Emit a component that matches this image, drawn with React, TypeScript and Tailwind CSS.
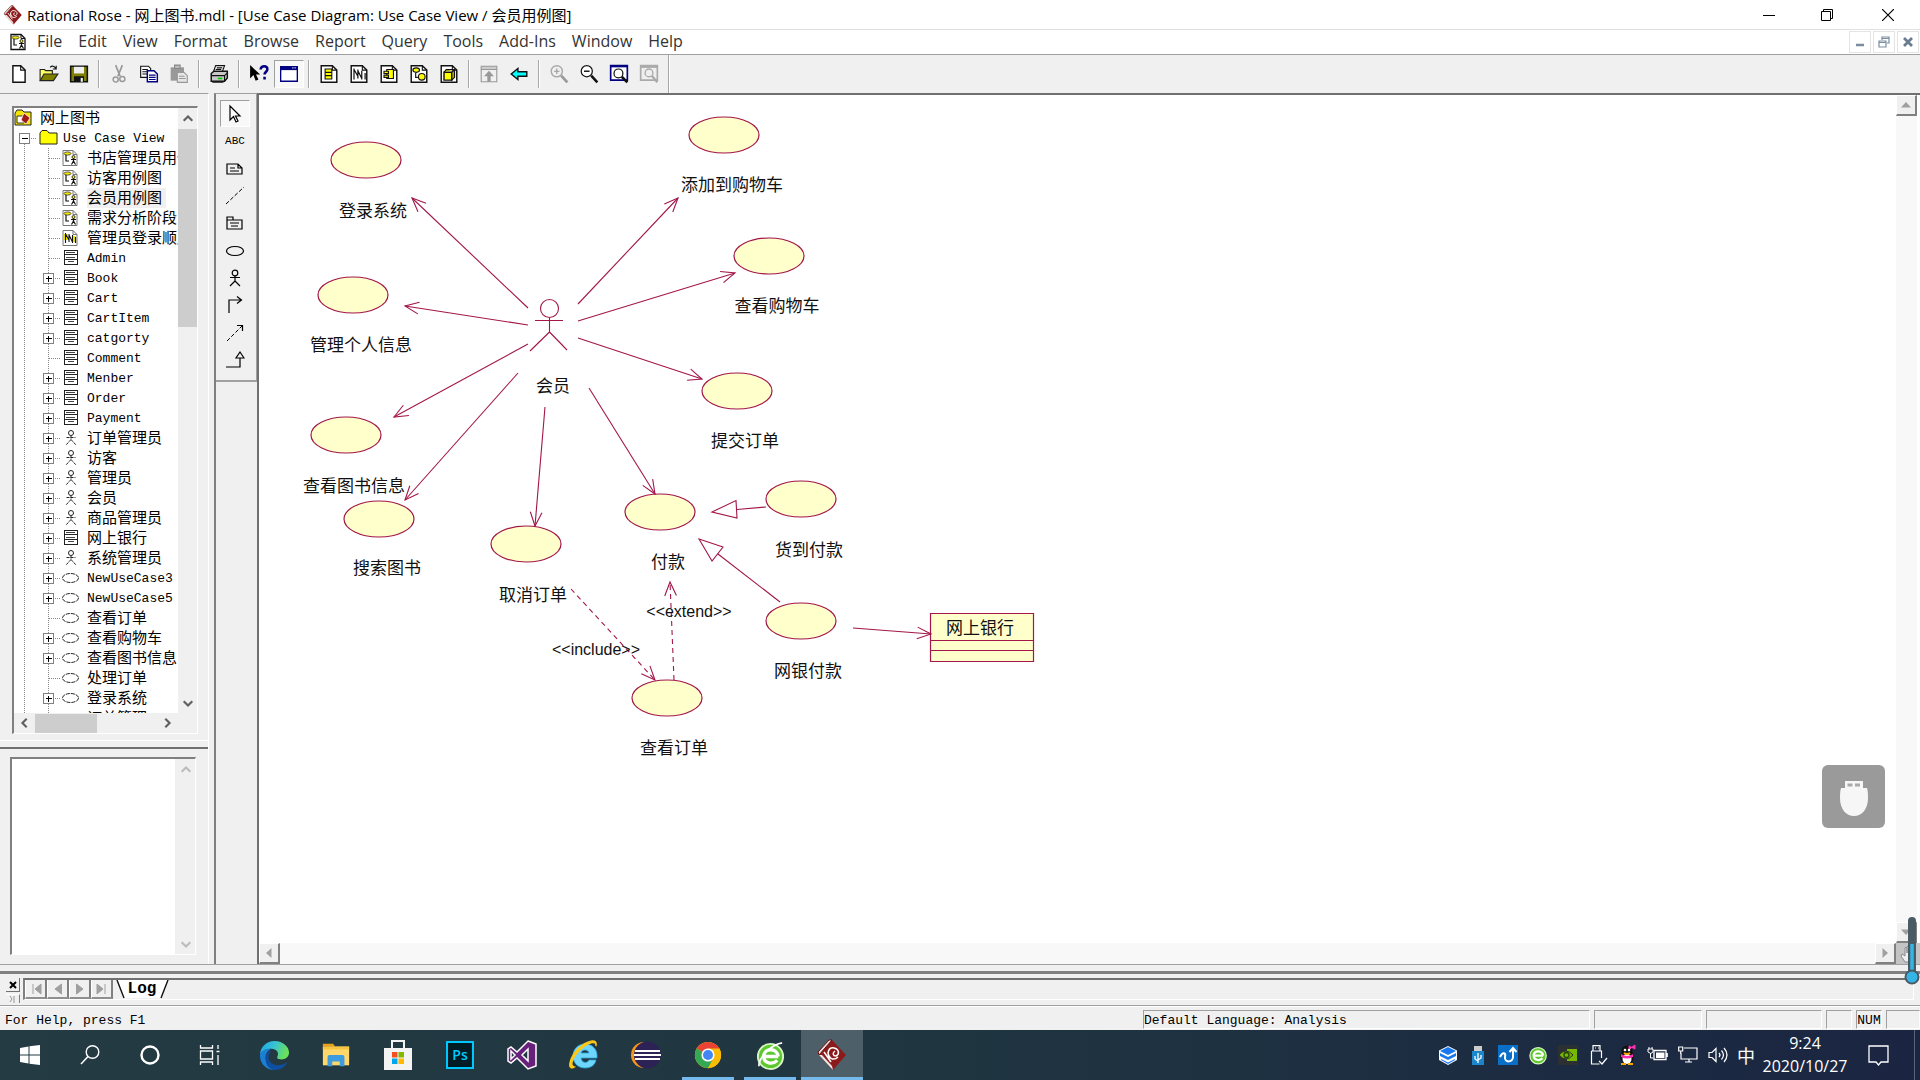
import React from "react";

const UI = 'font-["Open_Sans","Noto_Sans_CJK_SC",sans-serif]';

/* ---------- shared icons ---------- */

function RoseIcon({ size }: { size: number }) {
  return (
    <svg width={size} height={size} viewBox="0 0 32 32">
      <path d="M16 1 30 16 17 31 3 16Z" fill="#8c1a1a" />
      <path d="M16 1 3 16 2 13 13 1Z" fill="#e8dcdc" stroke="#6b1010" strokeWidth="1" />
      <path d="M3 16 17 31 16 27 6 16Z" fill="#f1e6e6" />
      <path d="M14 18c-4-4-1-10 4-9 5 1 6 6 2 8-3 0-4-3-1-5M12 13c0 7 6 9 10 5M8 13l7 10" fill="none" stroke="#fff" strokeWidth="1.500" />
    </svg>
  );
}

function Page({ children, size = 18, soft = false }: { children?: React.ReactNode; size?: number; soft?: boolean }) {
  const line = soft ? "#777" : "#111";
  return (
    <svg width={size} height={size} viewBox="0 0 18 18">
      <path d="M2 1.500h10l4 4v11H2z" fill="#fff" stroke={line} strokeWidth={soft ? 1 : 1.3} />
      <path d="M12 1.500v4h4" fill="none" stroke={line} />
      {children}
    </svg>
  );
}

const UseCaseGlyph = () => (
  <>
    <ellipse cx="6.500" cy="4.500" rx="3.500" ry="1.600" fill="#f2e600" stroke="#333" strokeWidth=".8" />
    <path d="M5 6v6h3M12.500 9v3.500M10 10.500h5M12.500 12l-2 3.500M12.500 12l2 3.500" fill="none" stroke="#111" strokeWidth="1.200" />
    <circle cx="12.500" cy="8" r="1.500" fill="#f2e600" stroke="#111" strokeWidth=".8" />
  </>
);
const SequenceGlyph = () => (
  <path d="M4.500 4v10M8 5v8M11.500 6v8M14.500 8v6M4.500 5 8 11M8 6l3.500 7" stroke="#111" strokeWidth="1.100" fill="none" />
);

/* ---------- tree ---------- */

type Kind = "usecaseDiagram" | "sequence" | "class" | "actor" | "usecase";
type Item = { label: string; kind: Kind; open?: boolean; latin?: boolean; selected?: boolean };

const items: Item[] = [
  { label: "书店管理员用例图", kind: "usecaseDiagram" },
  { label: "访客用例图", kind: "usecaseDiagram" },
  { label: "会员用例图", kind: "usecaseDiagram", selected: true },
  { label: "需求分析阶段", kind: "usecaseDiagram" },
  { label: "管理员登录顺序图", kind: "sequence" },
  { label: "Admin", kind: "class", latin: true },
  { label: "Book", kind: "class", open: true, latin: true },
  { label: "Cart", kind: "class", open: true, latin: true },
  { label: "CartItem", kind: "class", open: true, latin: true },
  { label: "catgorty", kind: "class", open: true, latin: true },
  { label: "Comment", kind: "class", latin: true },
  { label: "Menber", kind: "class", open: true, latin: true },
  { label: "Order", kind: "class", open: true, latin: true },
  { label: "Payment", kind: "class", open: true, latin: true },
  { label: "订单管理员", kind: "actor", open: true },
  { label: "访客", kind: "actor", open: true },
  { label: "管理员", kind: "actor", open: true },
  { label: "会员", kind: "actor", open: true },
  { label: "商品管理员", kind: "actor", open: true },
  { label: "网上银行", kind: "class", open: true },
  { label: "系统管理员", kind: "actor", open: true },
  { label: "NewUseCase3", kind: "usecase", open: true, latin: true },
  { label: "NewUseCase5", kind: "usecase", open: true, latin: true },
  { label: "查看订单", kind: "usecase" },
  { label: "查看购物车", kind: "usecase", open: true },
  { label: "查看图书信息", kind: "usecase", open: true },
  { label: "处理订单", kind: "usecase" },
  { label: "登录系统", kind: "usecase", open: true },
  { label: "订单管理", kind: "usecase", open: true },
];

function KindIcon({ kind }: { kind: Kind }) {
  switch (kind) {
    case "usecaseDiagram":
      return <Page soft><UseCaseGlyph /></Page>;
    case "sequence":
      return (
        <Page soft>
          <rect x="3" y="5" width="4" height="6" fill="#f2e600" />
          <rect x="11" y="7" width="3" height="6" fill="#f2e600" />
          <SequenceGlyph />
        </Page>
      );
    case "class":
      return (
        <svg width="18" height="18" viewBox="0 0 18 18" shapeRendering="crispEdges">
          <path d="M3 1.500h13v14H3zM3 5.500h13M3 10.500h13" fill="none" stroke="#222" strokeWidth="1" />
          <path d="M5 3.500h9M5 8.500h9M7 12.500h6" stroke="#444" strokeWidth="1" />
        </svg>
      );
    case "actor":
      return (
        <svg width="18" height="18" viewBox="0 0 18 18">
          <circle cx="10" cy="4" r="2.500" fill="none" stroke="#222" />
          <path d="M10 6.500v4M5.500 8.500h9M10 10.500l-5 5.500M10 10.500l5 5.500" fill="none" stroke="#222" strokeDasharray="3 1" />
        </svg>
      );
    default:
      return (
        <svg width="18" height="18" viewBox="0 0 18 18">
          <ellipse cx="9.500" cy="9" rx="8" ry="4.500" fill="none" stroke="#222" strokeDasharray="4 1" />
        </svg>
      );
  }
}

function Expander({ sign }: { sign: "+" | "-" }) {
  return (
    <svg width="24" height="20" viewBox="0 0 24 20" shapeRendering="crispEdges">
      <path d={sign === "+" ? "M12.500 0v20" : "M12.500 10v10"} stroke="#888" strokeDasharray="1 1" />
      <path d="M13 10.500h11" stroke="#888" strokeDasharray="1 1" />
      <rect x="7.500" y="5.500" width="10" height="10" fill="#fff" stroke="#808080" />
      <path d={sign === "+" ? "M10 10.500h6M12.500 8v6" : "M10 10.500h6"} stroke="#000" />
    </svg>
  );
}

const Branch = () => (
  <svg width="24" height="20" viewBox="0 0 24 20" shapeRendering="crispEdges">
    <path d="M12.500 0v20M13 10.500h11" stroke="#888" strokeDasharray="1 1" />
  </svg>
);

const Stem = () => (
  <svg width="22" height="20" viewBox="0 0 22 20" shapeRendering="crispEdges" className="shrink-0">
    <path d="M10.500 0v20" stroke="#888" strokeDasharray="1 1" />
  </svg>
);

const CJK15 = 'leading-[18px] pb-0.5 text-[15px] font-["Noto_Sans_CJK_SC",sans-serif]';
const MONO13 = 'leading-[18px] pt-0.5 text-[13px] font-["Liberation_Mono",monospace]';

function Tree() {
  return (
    <div className="h-full overflow-hidden bg-white text-black">
      <div className="flex h-5 items-center">
        <svg width="19" height="18" viewBox="0 0 19 18">
          <path d="M1 4 3 1h5l2 2h7v13H1z" fill="#f2e600" stroke="#222" />
          <path d="M3 7h7v7H3z" fill="#fff" stroke="#333" />
          <path d="m10 4 6 5-4 6-5-4z" fill="#a01818" stroke="#fff" strokeWidth=".7" />
        </svg>
        <span className={`ml-[7px] ${CJK15}`}>网上图书</span>
      </div>
      <div className="flex h-5 items-center">
        <button aria-label="Collapse Use Case View" className="-ml-0.5 shrink-0"><Expander sign="-" /></button>
        <svg width="20" height="18" viewBox="0 0 20 18" className="ml-[3px]">
          <path d="M1 4 3 1.500h5L10 4h8v11H1z" fill="#ff0" stroke="#222" />
        </svg>
        <span className={`ml-1 whitespace-nowrap ${MONO13}`}>Use Case View</span>
      </div>
      {items.map((it, i) => (
        <div key={i} className="flex h-5 items-center">
          <Stem />
          {it.open ? (
            <button aria-label={`Expand ${it.label}`} className="shrink-0"><Expander sign="+" /></button>
          ) : (
            <span className="shrink-0"><Branch /></span>
          )}
          <span className="ml-px shrink-0"><KindIcon kind={it.kind} /></span>
          <span className={`ml-2 whitespace-nowrap pr-1 ${it.latin ? MONO13 : CJK15} ${it.selected ? "bg-[#f0f0f0]" : ""}`}>
            {it.label}
          </span>
        </div>
      ))}
    </div>
  );
}

/* ---------- toolbar ---------- */

function ToolIcon({ name }: { name: string }) {
  const s = { width: 20, height: 20, viewBox: "0 0 18 18" };
  switch (name) {
    case "New":
      return <svg {...s}><path d="M3.500 1.500h7l4 4v11h-11z" fill="#fff" stroke="#111" strokeWidth="1.300" /><path d="M10.500 1.500v4h4" fill="none" stroke="#111" /></svg>;
    case "Open":
      return <svg {...s}><path d="M1 15V5h4l1 1h6v3" fill="#ffff66" stroke="#222" /><path d="M1 15 4.500 9H17l-4 6z" fill="#808000" stroke="#222" /><path d="M10 3c2-2 4-1 5 1m.500-2.500V4.500H12.500" fill="none" stroke="#111" /></svg>;
    case "Save":
      return <svg {...s}><path d="M1.500 2h15v14h-15z" fill="#808000" stroke="#111" strokeWidth="1.400" /><path d="M4.500 2.500h9v6h-9z" fill="#eee" /><path d="M4.500 11h9v5h-9z" fill="#111" /><path d="M10.500 12.500h2V16h-2z" fill="#eee" /></svg>;
    case "Cut":
      return <svg {...s}><path d="M6 1l4 10M12 1 8 11" stroke="#999" strokeWidth="1.500" fill="none" /><circle cx="6" cy="14" r="2.300" fill="none" stroke="#999" strokeWidth="1.300" /><circle cx="12" cy="13.500" r="2.300" fill="none" stroke="#999" strokeWidth="1.300" /></svg>;
    case "Copy":
      return <svg {...s}><path d="M1.500 2h7l2 2v8h-9z" fill="#fff" stroke="#111" /><path d="M3 5h5M3 7h5M3 9h5" stroke="#111" /><path d="M7.500 6h6l3 3v7h-9z" fill="#fff" stroke="#000080" strokeWidth="1.300" /><path d="M9 10h6M9 12h6M9 14h6" stroke="#000080" /></svg>;
    case "Paste":
      return <svg {...s}><path d="M1.500 3h12v12h-12z" fill="#999" /><path d="M5 1h5v3H5z" fill="#bbb" stroke="#888" /><path d="M7.500 7.500h6l3 3v6h-9z" fill="#e6e6e6" stroke="#999" /><path d="M9 11h5M9 13h6" stroke="#999" /></svg>;
    case "Print":
      return <svg {...s}><path d="M6 1.500h8L12 7H4z" fill="#fff" stroke="#111" /><path d="M2 8.500 4.500 6.500h12v6L14 15.500H2z" fill="#c8c8c8" stroke="#111" strokeWidth="1.300" /><path d="M2 10.500h12v5M14 10.500l2.500-2.500M7 3.500h5M6 5h5" stroke="#111" fill="none" /><path d="M8 13h4" stroke="#0c0" strokeWidth="1.500" /><path d="M3 16.500h10" stroke="#333" /></svg>;
    case "Context help":
      return <svg {...s}><path d="M1 1v12l3-3 2 5 2.500-1-2.200-4.500H10z" fill="#000" /><path d="M10.500 5c0-4 6.500-4 6 0 0 2-2.500 2-2.500 4.500M14 11.500V14" fill="none" stroke="#000080" strokeWidth="2.300" /></svg>;
    case "View documentation":
      return <svg {...s}><path d="M1.500 2.500h15v13h-15z" fill="#fff" stroke="#000080" strokeWidth="1.200" /><path d="M1 2h16v3.500H1z" fill="#000080" /><path d="M12 3.500h1M14 3.500h1" stroke="#fff" /></svg>;
    case "Browse class diagram":
      return <Page size={20}><path d="M5.500 4.500h6v9h-6z" fill="#ff0" stroke="#111" /><path d="M5.500 7.500h6M5.500 10.500h6" stroke="#111" /></Page>;
    case "Browse interaction diagram":
      return <Page size={20}><SequenceGlyph /></Page>;
    case "Browse component diagram":
      return <Page size={20}><path d="M7 5h6v8H7z" fill="#ff0" stroke="#111" /><path d="M4.500 6.500h4v2h-4zM4.500 10h4v2h-4z" fill="#ff0" stroke="#111" /></Page>;
    case "Browse state machine diagram":
      return <Page size={20}><ellipse cx="6.500" cy="5.500" rx="3" ry="2" fill="#ff0" stroke="#111" /><path d="M6 8v4h2" stroke="#111" fill="none" /><circle cx="11.500" cy="11.500" r="3" fill="#ff0" stroke="#111" /></Page>;
    case "Browse deployment diagram":
      return <Page size={20}><path d="M4.500 7.500h7v7h-7z" fill="#ff0" stroke="#111" strokeWidth="1.300" /><path d="m4.500 7.500 2-2.500h7.500v7l-2.500 2.500v-7L14 5" fill="#aaaa00" stroke="#111" /></Page>;
    case "Browse parent":
      return <svg {...s}><path d="M2 2h14v3H2z" fill="#ccc" stroke="#999" /><path d="M2 5v11h14V5" fill="none" stroke="#999" /><path d="M9 6 4.500 11H7.500v5h3v-5h3z" fill="#999" /></svg>;
    case "Browse previous":
      return <svg {...s}><path d="M2 9 8 4v3h8v4H8v3z" fill="#0ff" stroke="#111" strokeWidth="1.300" /></svg>;
    case "Zoom in":
      return <svg {...s}><circle cx="7" cy="6.500" r="5" fill="none" stroke="#aaa" strokeWidth="1.300" /><path d="M4.500 6.500h5M7 4v5" stroke="#999" /><path d="m11 10.500 5.500 6" stroke="#999" strokeWidth="2.500" /></svg>;
    case "Zoom out":
      return <svg {...s}><circle cx="7" cy="6.500" r="5" fill="#fff" stroke="#111" strokeWidth="1.100" /><path d="M4.500 6.500h5" stroke="#111" strokeWidth="1.300" /><path d="m11 10.500 5.500 6" stroke="#111" strokeWidth="2.300" /></svg>;
    case "Fit in window":
      return <svg {...s}><path d="M1.500 1.500h15v13h-15z" fill="#fff" stroke="#000080" strokeWidth="1.500" /><path d="M1 2h16" stroke="#000080" strokeWidth="2" /><circle cx="8.500" cy="8.500" r="4" fill="#fff" stroke="#111" strokeWidth="1.100" /><path d="m11.500 11.500 5 5" stroke="#111" strokeWidth="2.300" /></svg>;
    default:
      return <svg {...s}><path d="M1.500 1.500h15v13h-15z" fill="#eee" stroke="#aaa" strokeWidth="1.500" /><path d="M1 2.500h16" stroke="#aaa" strokeWidth="2" /><circle cx="9" cy="8" r="3.500" fill="none" stroke="#aaa" strokeWidth="1.200" /><path d="m11.500 10.500 5 6" stroke="#aaa" strokeWidth="2" /></svg>;
  }
}

const toolGroups = [
  ["New", "Open", "Save"],
  ["Cut", "Copy", "Paste"],
  ["Print"],
  ["Context help", "View documentation"],
  ["Browse class diagram", "Browse interaction diagram", "Browse component diagram", "Browse state machine diagram", "Browse deployment diagram"],
  ["Browse parent", "Browse previous"],
  ["Zoom in", "Zoom out", "Fit in window", "Undo fit in window"],
];

function Toolbar() {
  return (
    <div className="flex h-[39px] shrink-0 items-center border-t border-[#a0a0a0] bg-[#f0f0f0] pl-1">
      {toolGroups.map((g, i) => (
        <React.Fragment key={i}>
          {i > 0 && <div className="mx-1 h-7 w-0.5 border-l border-[#a8a8a8] bg-white" />}
          {g.map((n) => (
            <button
              key={n}
              aria-label={n}
              className={`grid h-7 w-[30px] place-items-center ${n === "View documentation" ? "border border-b-white border-l-[#a0a0a0] border-r-white border-t-[#a0a0a0] bg-[#f8f8f8]" : ""}`}
            >
              <ToolIcon name={n} />
            </button>
          ))}
        </React.Fragment>
      ))}
      <div className="ml-1 h-full w-0.5 border-l border-[#a8a8a8] bg-white" />
    </div>
  );
}

/* ---------- palette ---------- */

const palette: { name: string; art: React.ReactNode }[] = [
  { name: "Selection tool", art: <path d="M5 2v14l3.500-3.500L11 18l2-1-2.500-5H15z" fill="#fff" stroke="#000" strokeWidth="1.200" /> },
  { name: "Text box", art: null },
  { name: "Note", art: <path d="M2 5h11l4 4v6H2zM13 5v4h4M5 9h5M5 12h9" fill="none" stroke="#000" strokeWidth="1.200" /> },
  { name: "Anchor note to item", art: <path d="M1 18 19 1" fill="none" stroke="#000" strokeDasharray="4 2" /> },
  { name: "Package", art: <path d="M2 7h15v9H2zM2 7V4h6v3M5 10h9M6 13h7" fill="none" stroke="#000" strokeWidth="1.200" /> },
  { name: "Use case", art: <ellipse cx="10" cy="10" rx="8.500" ry="4.500" fill="none" stroke="#000" strokeWidth="1.200" /> },
  { name: "Actor", art: <><circle cx="10" cy="5" r="2.800" fill="none" stroke="#000" strokeWidth="1.200" /><path d="M10 8v5M5 9.500h10M10 13l-5 5M10 13l5 5" stroke="#000" fill="none" strokeWidth="1.200" /></> },
  { name: "Unidirectional association", art: <path d="M4 18V5h12M12 1.500 16.500 5 12 8.500" fill="none" stroke="#000" strokeWidth="1.200" /> },
  { name: "Dependency", art: <><path d="M2 18 17 3" fill="none" stroke="#000" strokeDasharray="4 2" /><path d="M12 2.500h5.500V8" fill="none" stroke="#000" strokeWidth="1.200" /></> },
  { name: "Generalization", art: <path d="M1 17h14V8M11 8h8L15 2z" fill="none" stroke="#000" strokeWidth="1.200" /> },
];

/* ---------- diagram ---------- */

const ellipses = [
  [366, 160], [724, 135], [769, 256], [353, 295], [737, 391], [346, 435], [379, 519],
  [526, 544], [660, 512], [801, 499], [801, 621], [667, 698],
];

const captions: [string, number, number][] = [
  ["登录系统", 373, 210], ["添加到购物车", 732, 184], ["查看购物车", 777, 305], ["管理个人信息", 361, 344],
  ["会员", 553, 385], ["提交订单", 745, 440], ["查看图书信息", 354, 485], ["搜索图书", 387, 567],
  ["取消订单", 533, 594], ["付款", 668, 561], ["货到付款", 809, 549], ["网银付款", 808, 670],
  ["查看订单", 674, 747], ["网上银行", 980, 627],
];

type Link = { from: [number, number]; to: [number, number]; dashed?: boolean };
const links: Link[] = [
  { from: [528, 308], to: [412, 198] },
  { from: [528, 325], to: [405, 306] },
  { from: [528, 344], to: [394, 417] },
  { from: [518, 373], to: [405, 500] },
  { from: [545, 407], to: [535, 526] },
  { from: [589, 388], to: [655, 494] },
  { from: [578, 338], to: [702, 379] },
  { from: [578, 321], to: [735, 273] },
  { from: [578, 304], to: [678, 198] },
  { from: [853, 628], to: [931, 634] },
  { from: [674, 680], to: [670, 582], dashed: true },
  { from: [571, 589], to: [655, 680], dashed: true },
];

function headPath({ from, to }: Link) {
  const a = Math.atan2(to[1] - from[1], to[0] - from[0]);
  const p = (d: number) => `${to[0] - 15 * Math.cos(a + d)} ${to[1] - 15 * Math.sin(a + d)}`;
  return `M${p(0.4)}L${to[0]} ${to[1]}L${p(-0.4)}`;
}

function Diagram() {
  return (
    <svg width="800" height="700" viewBox="260 95 800 700" className="ml-px block" role="img" aria-label="会员用例图">
      <g fill="#ffffcc" stroke="#a3164a" strokeWidth="1.200">
        {ellipses.map(([x, y]) => <ellipse key={`${x}-${y}`} cx={x} cy={y} rx="35" ry="18" />)}
        <path d="M930.500 613.500h103v48h-103zM930.500 640.500h103M930.500 650.500h103" />
      </g>
      <g fill="none" stroke="#a3164a" strokeWidth="1.100">
        {links.map((l, i) => (
          <React.Fragment key={i}>
            <path d={`M${l.from[0]} ${l.from[1]}L${l.to[0]} ${l.to[1]}`} strokeDasharray={l.dashed ? "5 4" : undefined} />
            <path d={headPath(l)} />
          </React.Fragment>
        ))}
        <path d="M712 512 736 500.500 737 518zM737 509.500 766 507" />
        <path d="M699 539 723 547 712 561zM718 554 780 602" />
        <circle cx="549.500" cy="308.500" r="9" />
        <path d="M549.500 318v14M535 320.500h28M549.500 332 530 351M549.500 332 567 350" />
      </g>
      <g fill="#111" textAnchor="middle" fontSize="17" fontFamily='"Noto Sans CJK SC", sans-serif'>
        {captions.map(([t, x, y]) => <text key={t} x={x} y={y + 7}>{t}</text>)}
      </g>
      <g fill="#111" textAnchor="middle" fontSize="16" fontFamily='"Liberation Sans", sans-serif'>
        <text x="689" y="617">&lt;&lt;extend&gt;&gt;</text>
        <text x="596" y="655">&lt;&lt;include&gt;&gt;</text>
      </g>
    </svg>
  );
}

/* ---------- scrollbars ---------- */

const chevrons = { up: "M2 9l5-5 5 5", down: "M2 5l5 5 5-5", left: "M9 2 4 7l5 5", right: "M5 2l5 5-5 5" };
const triangles = { up: "M2 9.500 7 4l5 5.500z", down: "M2 4.500h10L7 10z", left: "M9.500 2v10L4 7z", right: "M4.500 2v10L10 7z" };
type Dir = keyof typeof chevrons;

function Chevron({ dir, color = "#606060" }: { dir: Dir; color?: string }) {
  return (
    <button aria-label={`Scroll ${dir}`} className="grid size-[21px] shrink-0 place-items-center">
      <svg width="12" height="12" viewBox="0 0 14 14"><path d={chevrons[dir]} fill="none" stroke={color} strokeWidth="2.500" /></svg>
    </button>
  );
}

function Raised({ dir, label }: { dir: Dir; label: string }) {
  return (
    <button aria-label={label} className="grid size-[21px] shrink-0 place-items-center border-b-2 border-l border-r-2 border-t border-b-[#808080] border-l-white border-r-[#808080] border-t-white bg-[#f0f0f0]">
      <svg width="14" height="14" viewBox="0 0 14 14"><path d={triangles[dir]} fill="#a0a0a0" /></svg>
    </button>
  );
}

/* ---------- taskbar ---------- */

const apps: { name: string; art: React.ReactNode; running?: boolean; active?: boolean }[] = [
  {
    name: "Microsoft Edge",
    art: (
      <svg width="31" height="31" viewBox="0 0 32 32">
        <defs>
          <linearGradient id="edgeTop" x1="0" y1="0" x2="1" y2="0.300"><stop offset="0" stopColor="#1ea4e0" /><stop offset=".5" stopColor="#35c1d8" /><stop offset="1" stopColor="#6be05a" /></linearGradient>
        </defs>
        <path d="M1 16C1 7 8 1 16 1c9 0 15 6 15 12 0 5-4 7-8 7-3 0-5-1-4-3 2-4-1-8-6-8-6 0-12 4-12 7z" fill="url(#edgeTop)" />
        <path d="M1 16c0-4 6-8 12-7-5 2-7 7-6 12 1 6 6 10 12 10h-3C8 31 1 25 1 16z" fill="#1b7fd6" />
        <path d="M13 11c-4 3-4 9-1 12 4 4 11 4 17 0-2 5-7 8-12 8C11 31 7 26 7 20c0-5 2-8 6-9z" fill="#0f4f9f" />
      </svg>
    ),
  },
  {
    name: "File Explorer",
    art: (
      <svg width="30" height="30" viewBox="0 0 32 32">
        <path d="M2 4h11l2 3H2z" fill="#e8a317" />
        <path d="M2 7h28v20H2z" fill="#ffd76a" /><path d="M2 7h28v3H2z" fill="#f9c440" />
        <path d="M7 28V18q0-2 2-2h14q2 0 2 2v10h-5v-5h-8v5z" fill="#3d9be0" />
      </svg>
    ),
  },
  {
    name: "Microsoft Store",
    art: (
      <svg width="32" height="34" viewBox="0 0 32 34">
        <path d="M10 10V3h12v7" fill="none" stroke="#f3f3f3" strokeWidth="2" />
        <path d="M2 10h28v22H2z" fill="#f3f3f3" />
        <path d="M10 14h5.500v5.500H10z" fill="#f25022" /><path d="M16.500 14H22v5.500h-5.500z" fill="#7fba00" />
        <path d="M10 20.500h5.500V26H10z" fill="#00a4ef" /><path d="M16.500 20.500H22V26h-5.500z" fill="#ffb900" />
      </svg>
    ),
  },
  {
    name: "Photoshop",
    art: <span className={`grid h-7 w-7 place-items-center border-2 border-[#00c8ff] bg-[#001d26] text-sm font-semibold leading-4 text-[#00c8ff] ${UI}`}>Ps</span>,
  },
  {
    name: "Visual Studio",
    art: (
      <svg width="32" height="32" viewBox="0 0 32 32">
        <path d="M22 2 30 5v22l-8 3L11 19l-6 5-3-2V10l3-2 6 5zM22 10l-6 6 6 6zM5 12v8l4-4z" fill="#68217a" fillRule="evenodd" stroke="#fff" strokeWidth="1.500" />
      </svg>
    ),
  },
  {
    name: "Internet Explorer",
    art: (
      <svg width="32" height="32" viewBox="0 0 32 32">
        <path d="M17 5C10 5 5 10 5 17s5 12 12 12c6 0 10-3 11-8h-7c-1 3-7 4-8-2h16C30 10 24 5 17 5zm-4 9c1-4 7-4 8 0z" fill="#6fd6fb" fillRule="evenodd" stroke="#2ba6e0" strokeWidth=".8" />
        <path d="M6 28C-1 32 1 19 10 10 19 1 30-1 28 7c1-6-7-4-15 3S1 27 6 28z" fill="#fcc81a" stroke="#fcc81a" strokeWidth="1.500" />
      </svg>
    ),
  },
  {
    name: "Eclipse",
    art: (
      <svg width="32" height="32" viewBox="0 0 32 32">
        <circle cx="14" cy="16" r="13" fill="#f7941e" /><circle cx="17.500" cy="16" r="13.500" fill="#2c2255" />
        <path d="M5 12h25M4 16h27M5 20h25" stroke="#fff" strokeWidth="2" />
      </svg>
    ),
  },
  {
    name: "Chrome",
    running: true,
    art: (
      <svg width="30" height="30" viewBox="0 0 32 32">
        <circle cx="16" cy="16" r="14" fill="#fbbc05" />
        <path d="M16 16 3.900 9A14 14 0 0 1 28.100 9z" fill="#ea4335" />
        <path d="M16 16 3.900 9A14 14 0 0 0 16 30l6-10.500z" fill="#34a853" />
        <path d="M16 9h12.100A14 14 0 0 1 16 30l6-10.500z" fill="#fbbc05" />
        <circle cx="16" cy="16" r="7" fill="#fff" /><circle cx="16" cy="16" r="5.300" fill="#4285f4" />
      </svg>
    ),
  },
  { name: "360 Browser", running: true, art: <GreenE size={31} /> },
  { name: "Rational Rose", running: true, active: true, art: <RoseIcon size={32} /> },
];

function GreenE({ size }: { size: number }) {
  return (
    <svg width={size} height={size} viewBox="0 0 32 32">
      <circle cx="16" cy="17" r="13" fill="#5cc82e" stroke="#d9f5c4" strokeWidth="2" />
      <path d="M24 17H9c0 7 9 9 14 4M9 16c1-8 14-8 15 1" fill="none" stroke="#fff" strokeWidth="3.500" />
      <path d="M4 27C4 18 16 5 28 3" fill="none" stroke="#fff" strokeWidth="1.800" />
    </svg>
  );
}

const tray: { name: string; art: React.ReactNode }[] = [
  { name: "Box", art: <><path d="M10 1 19 5.500v9.500L10 20 1 15V5.500z" fill="#fff" /><path d="M10 2 18 6l-8 4-8-4z" fill="#1677ee" /><path d="m2 8 8 4 8-4v3l-8 4-8-4zM3 14l7 3.500 7-3.500v1l-7 4-7-4z" fill="#1677ee" /></> },
  { name: "USB helper", art: <><path d="M6 1h8v5H6z" fill="#ccc" /><path d="M4 6h12v14H4z" fill="#1b86cc" /><path d="M10 8v10M7 11v3l3 2M13 10v3l-3 2" stroke="#fff" strokeWidth="1.300" fill="none" /></> },
  { name: "Driver tool", art: <><path d="M0 0h20v20H0z" fill="#0a6fc8" /><path d="M2 12c3-6 6-4 5 0-1 6 9 6 8-1V4M11.500 7 15 3l3.500 4" stroke="#fff" strokeWidth="2" fill="none" /></> },
  { name: "360", art: <g transform="scale(.63)"><circle cx="16" cy="17" r="13" fill="#5cc82e" stroke="#d9f5c4" strokeWidth="2" /><path d="M24 17H9c0 7 9 9 14 4M9 16c1-8 14-8 15 1" fill="none" stroke="#fff" strokeWidth="3.500" /></g> },
  { name: "NVIDIA", art: <><path d="M0 0h20v20H0z" fill="#2d3033" /><path d="M9 4h10v12H9z" fill="#76b900" /><path d="M1 10q7-8 14 0-7 8-14 0z" fill="#76b900" stroke="#2d3033" /><circle cx="8.500" cy="10" r="2.500" fill="none" stroke="#244200" strokeWidth="1.300" /></> },
  { name: "Eject device", art: <path d="M5 6V.700h7V6M3.500 6h10v7M3.500 6v13h8M7 3h1M10 3h1M11 16l3 3 5-6" fill="none" stroke="#fff" strokeWidth="1.200" /> },
  { name: "QQ", art: <><ellipse cx="9" cy="12" rx="7" ry="7" fill="#111" /><circle cx="9" cy="6" r="5.500" fill="#111" /><ellipse cx="9" cy="14" rx="4.500" ry="5" fill="#fff" /><path d="M3 9q6 4 12 0v3q-6 3-12 0z" fill="#ff2fb0" /><path d="M11 1l6 3V0l-3 2-3 3z" fill="#ff2fb0" stroke="#ff2fb0" /><path d="M6 8q3 2 6 0M3 19h5M10 19h5" stroke="#f6a400" strokeWidth="2" /><circle cx="7" cy="5" r="1.300" fill="#fff" /><circle cx="11" cy="5" r="1.300" fill="#fff" /></> },
  { name: "Battery", art: <><path d="M6 5.500h12v9H6zM19.200 8v4" fill="none" stroke="#fff" strokeWidth="1.300" /><path d="M8 7.500h8.500v5.500H8z" fill="#fff" /><path d="M0 4h5v3q-2 3-5 0zM1 2v2M4 2v2M2.500 8v5h3" fill="none" stroke="#fff" /></> },
  { name: "Network", art: <path d="M6 3h13v11H3V8M11 14v3M7 17h7M.700 2h4v4h-4zM2.700 6v3" fill="none" stroke="#fff" strokeWidth="1.200" /> },
  { name: "Volume", art: <path d="M1 7.500h3l4-4v13l-4-4H1zM11 8q2 2 0 4M13.500 5.500q4 4.500 0 9M16 3q6 7 0 14" fill="none" stroke="#fff" strokeWidth="1.200" /> },
];

function Taskbar() {
  return (
    <div className={`flex h-[50px] shrink-0 justify-between bg-gradient-to-r from-[#243b43] via-[#1f3540] to-[#1b2542] text-white ${UI}`}>
      <div className="flex">
        <button aria-label="Start" className="grid w-[60px] place-items-center">
          <svg width="20" height="20" viewBox="0 0 20 20"><path d="M0 3 8.500 1.500v8H0zM9.500 1.300 20 0v9.500H9.500zM0 10.500h8.500v8L0 17zM9.500 10.500H20V20L9.500 18.700z" fill="#fff" /></svg>
        </button>
        <button aria-label="Search" className="grid w-[60px] place-items-center">
          <svg width="20" height="20" viewBox="0 0 20 20"><circle cx="12.500" cy="7" r="6.300" fill="none" stroke="#fff" strokeWidth="1.400" /><path d="M8 11.500 1 19" stroke="#fff" strokeWidth="1.500" /></svg>
        </button>
        <button aria-label="Cortana" className="grid w-[60px] place-items-center">
          <svg width="20" height="20" viewBox="0 0 20 20"><circle cx="10" cy="10" r="8.500" fill="none" stroke="#fff" strokeWidth="2.400" /></svg>
        </button>
        <button aria-label="Task View" className="grid w-[60px] place-items-center">
          <svg width="22" height="20" viewBox="0 0 22 20"><path d="M1.500 0v3h12V0M1.500 6h12v8h-12zM1.500 20v-3h12v3M19 0v4M19 10v10M17.500 6.500h3" fill="none" stroke="#fff" strokeWidth="1.300" /></svg>
        </button>
        <div className="ml-[3px] flex">
          {apps.map((a) => (
            <button key={a.name} aria-label={a.name} className={`relative grid w-[62px] place-items-center ${a.active ? "bg-[#4d6069]" : ""}`}>
              {a.art}
              {a.running && <span className={`absolute bottom-0 h-[3px] bg-[#76b9ed] ${a.active ? "inset-x-0" : "inset-x-[5px]"}`} />}
            </button>
          ))}
        </div>
      </div>
      <div className="flex items-center">
        {tray.map((t) => (
          <button key={t.name} aria-label={t.name} className="grid w-[30px] place-items-center">
            <svg width="20" height="20" viewBox="0 0 20 20" className="overflow-visible">{t.art}</svg>
          </button>
        ))}
        <button className='w-[26px] text-center font-["Noto_Sans_CJK_SC",sans-serif] text-lg'>中</button>
        <div className="w-24 pr-1 text-center text-base leading-[23px]">
          <div>9:24</div>
          <div>2020/10/27</div>
        </div>
        <button aria-label="Notifications" className="mr-[6px] grid w-[46px] place-items-center">
          <svg width="21" height="21" viewBox="0 0 21 21"><path d="M1 1h19v16h-7l-2.500 3L8 17H1z" fill="none" stroke="#fff" strokeWidth="1.300" /></svg>
        </button>
        <div className="ml-[7px] h-full w-[6px] border-l border-[#5b6578]" />
      </div>
    </div>
  );
}

/* ---------- application ---------- */

const menus = ["File", "Edit", "View", "Format", "Browse", "Report", "Query", "Tools", "Add-Ins", "Window", "Help"];
const sunken = "border-b border-l-2 border-r border-t-2 border-b-white border-l-[#808080] border-r-white border-t-[#808080]";
const cell = "h-[19px] border border-b-white border-l-[#a0a0a0] border-r-white border-t-[#a0a0a0]";
const checker = "bg-[#f8f8f8]";
const mdi = "grid h-[22px] w-[22px] place-items-center border border-[#e4e4e4]";

export default function App() {
  return (
    <div className="flex h-screen flex-col overflow-hidden bg-[#f0f0f0] text-black">
      <header className={`flex h-[29px] shrink-0 items-center bg-white pl-[3px] ${UI}`}>
        <RoseIcon size={20} />
        <h1 className="ml-1 whitespace-nowrap text-[15px] leading-6">Rational Rose - 网上图书.mdl - [Use Case Diagram: Use Case View / 会员用例图]</h1>
        <div className="ml-auto flex">
          <button aria-label="Minimize" className="grid w-[58px] place-items-center"><svg width="12" height="12"><path d="M0 6.500h12" stroke="#000" /></svg></button>
          <button aria-label="Restore" className="grid w-[58px] place-items-center"><svg width="12" height="12" fill="none" stroke="#000"><path d="M.500 2.500h9v9h-9zM2.500 2.500v-2h9v9h-2" /></svg></button>
          <button aria-label="Close" className="grid w-16 place-items-center"><svg width="12" height="12"><path d="m0 0 12 12M12 0 0 12" stroke="#000" strokeWidth="1.200" /></svg></button>
        </div>
      </header>

      <nav className={`flex h-[25px] shrink-0 items-center border-t border-[#e0e0e0] bg-white pl-[9px] ${UI}`}>
        <Page><UseCaseGlyph /></Page>
        <div className="ml-0.5 flex pb-0.5">
          {menus.map((m) => <button key={m} className="px-2 text-base leading-[22px] text-[#333]">{m}</button>)}
        </div>
        <div className="ml-auto flex gap-0.5 pr-px">
          <button aria-label="Minimize diagram" className={mdi}><svg width="12" height="12"><path d="M2 9h8" stroke="#7a8da0" strokeWidth="2.500" /></svg></button>
          <button aria-label="Restore diagram" className={mdi}><svg width="12" height="12" fill="none" stroke="#7a8da0" strokeWidth="1.200"><path d="M1 5h7v6H1zM1 6.500h7M4 4V1h7v6H9M4 2.500h7" /></svg></button>
          <button aria-label="Close diagram" className={mdi}><svg width="12" height="12"><path d="m2 2 8 8M10 2 2 10" stroke="#6a7d90" strokeWidth="2.800" /></svg></button>
        </div>
      </nav>

      <Toolbar />

      <main className="flex min-h-0 flex-1 border-b border-b-[#a0a0a0]">
        <aside className="flex w-[209px] shrink-0 flex-col border-r border-t border-r-white border-t-[#a0a0a0]">
          <div className="min-h-0 flex-1 border-b border-white pb-1.5 pl-3 pr-[10px] pt-3">
            <div className={`flex h-full flex-col ${sunken}`}>
              <div className="flex min-h-0 flex-1">
                <div className="min-w-0 flex-1"><Tree /></div>
                <div className="flex w-[19px] shrink-0 flex-col items-center bg-[#f0f0f0]">
                  <Chevron dir="up" />
                  <div className="h-[198px] w-full bg-[#cdcdcd]" />
                  <div className="mt-auto"><Chevron dir="down" /></div>
                </div>
              </div>
              <div className="flex h-5 shrink-0 items-center bg-[#f0f0f0] pr-5">
                <Chevron dir="left" />
                <div className="h-[19px] w-[62px] bg-[#cdcdcd]" />
                <div className="ml-auto"><Chevron dir="right" /></div>
              </div>
            </div>
          </div>
          <div className="mt-1.5 h-[217px] shrink-0 border-t-2 border-[#707070] pb-[9px] pl-[10px] pr-3 pt-2">
            <div className={`flex h-full ${sunken}`}>
              <textarea aria-label="Documentation" className="min-w-0 flex-1 resize-none bg-white outline-none" />
              <div className="flex w-5 shrink-0 flex-col justify-between bg-[#f0f0f0]">
                <Chevron dir="up" color="#bbb" />
                <Chevron dir="down" color="#bbb" />
              </div>
            </div>
          </div>
        </aside>

        <div className="ml-[5px] w-[43px] shrink-0 border-l-2 border-t border-l-[#808080] border-t-[#a0a0a0]">
          <div className="flex h-[288px] flex-col items-center justify-between border-b-2 border-r border-b-[#a0a0a0] border-r-[#a0a0a0] py-[6px] pr-0.5">
            {palette.map((p, i) => (
              <button
                key={p.name}
                aria-label={p.name}
                className={`grid h-7 w-[30px] place-items-center ${i === 0 ? "border border-b-white border-l-[#a0a0a0] border-r-white border-t-[#a0a0a0] bg-[#f8f8f8]" : ""}`}
              >
                {p.art ? (
                  <svg width="20" height="20" viewBox="0 0 20 20">{p.art}</svg>
                ) : (
                  <span className='font-["Liberation_Mono",monospace] text-[11px] leading-4'>ABC</span>
                )}
              </button>
            ))}
          </div>
        </div>

        <section className="relative flex min-w-0 flex-1 flex-col border-l-2 border-t-2 border-[#707070] bg-white">
          <div className="flex min-h-0 flex-1">
            <div className="min-w-0 flex-1 overflow-hidden"><Diagram /></div>
            <div className={`mr-[3px] flex shrink-0 flex-col justify-between ${checker}`}>
              <Raised dir="up" label="Scroll diagram up" />
              <Raised dir="down" label="Scroll diagram down" />
            </div>
          </div>
          <div className={`flex shrink-0 ${checker}`}>
            <Raised dir="left" label="Scroll diagram left" />
            <div className="ml-auto"><Raised dir="right" label="Scroll diagram right" /></div>
            <div className="grid w-6 place-items-center bg-[#c4c4c4]">
              <svg width="16" height="18" viewBox="0 0 16 18"><path d="M5 17 1 11l1-2 3 2V3q1-2 2 0v5V2q1-2 2 0v6-5q1-2 2 0v6-4q2-1 2 0v8l-2 4z" fill="#f0f0f0" stroke="#888" /></svg>
            </div>
          </div>
          <div className="absolute bottom-[136px] right-[35px] grid size-[63px] place-items-center rounded-md bg-[#9a9a9a] pt-1">
            <svg width="30" height="35" viewBox="0 0 30 35">
              <path d="M6 0h18v7h4q1 3 1 10c0 11-6 18-14 18S1 28 1 17Q1 10 2 7h4z" fill="#f6f6f6" />
              <path d="M8.500 2.500h5v3h-5zM16 2.500h5v3h-5z" fill="#aaa" />
            </svg>
          </div>
          <svg width="16" height="70" viewBox="0 0 16 70" className="absolute -bottom-[22px] right-0 z-10">
            <path d="M8 5v55" stroke="#4a5b66" strokeWidth="8" strokeLinecap="round" />
            <path d="M8 28v35" stroke="#35b5e5" strokeWidth="3.500" />
            <circle cx="8" cy="61" r="6.500" fill="#35b5e5" stroke="#4a5b66" strokeWidth="2" />
          </svg>
        </section>
      </main>

      <section className="flex h-[41px] shrink-0 flex-col border-b border-[#a0a0a0]">
        <div className="mt-[6px] h-[3px] shrink-0 bg-[#808080]" />
        <div className="flex flex-1 pb-[6px] pl-[6px] pr-[6px] pt-1">
          <div className="flex w-[17px] flex-col gap-0.5">
            <button aria-label="Close log" className="grid h-[14px] w-[14px] place-items-center border-b border-r border-[#707070]">
              <svg width="8" height="8"><path d="m1 1 6 6M7 1 1 7" stroke="#000" strokeWidth="2" /></svg>
            </button>
            <div className="grid h-[9px] w-[14px] place-items-center border-b-0 border-r border-t border-r-[#808080] border-t-white">
              <svg width="8" height="7"><path d="M1 0l2 3-2 3M5 0v7" fill="none" stroke="#999" /></svg>
            </div>
          </div>
          <div className="flex h-[22px] flex-1 border-b border-l-2 border-r border-t-2 border-b-white border-l-[#808080] border-r-white border-t-[#707070]">
            {["M4 2v10M12 2v10L6 7z", "M10.500 2v10L4 7z", "M3.500 2v10L10 7z", "M2 2v10l6-5zM10 2v10"].map((d, i) => (
              <button key={d} aria-label={["First tab", "Previous tab", "Next tab", "Last tab"][i]} className="grid h-full w-[22px] place-items-center border-b-2 border-l border-r-2 border-b-[#909090] border-l-white border-r-[#808080]">
                <svg width="14" height="14" viewBox="0 0 14 14"><path d={d} fill="#a0a0a0" /><path d={d} fill="none" stroke="#a0a0a0" /></svg>
              </button>
            ))}
            <button className="relative ml-0.5 flex h-full w-[54px] items-start justify-center">
              <svg width="54" height="19" viewBox="0 0 54 19" className="absolute inset-0">
                <path d="M2 0 9 18H46L53 0z" fill="#fff" /><path d="M2 0 9 18M46 18 53 0" stroke="#111" strokeWidth="1.400" />
              </svg>
              <span className='relative font-["Liberation_Mono",monospace] text-base font-bold leading-[18px]'>Log</span>
            </button>
          </div>
        </div>
      </section>

      <footer className="flex h-6 shrink-0 items-end gap-1 whitespace-nowrap border-t border-white pb-px pl-[5px] font-['Liberation_Mono',monospace] text-[13px] leading-[20px]">
        <span className="h-[19px] flex-1 border-t border-transparent">For Help, press F1</span>
        <span className={`w-[447px] ${cell}`}>Default Language: Analysis</span>
        <span className={`w-[108px] ${cell}`} />
        <span className={`w-[116px] ${cell}`} />
        <span className={`w-[26px] ${cell}`} />
        <span className={`w-[26px] text-center ${cell}`}>NUM</span>
        <span className={`w-[34px] ${cell}`} />
      </footer>

      <Taskbar />
    </div>
  );
}
